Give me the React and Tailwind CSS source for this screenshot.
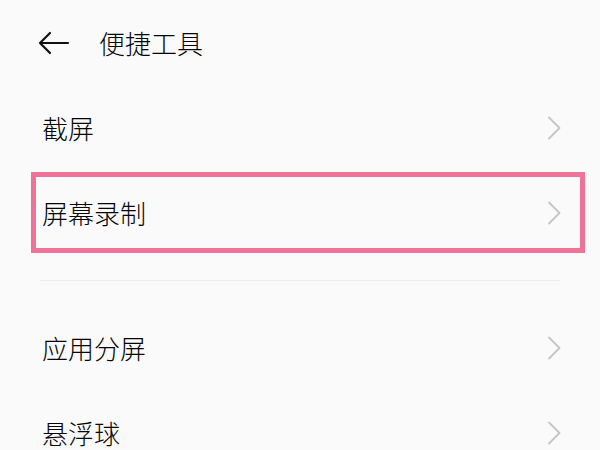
import React from "react";

const font = { fontFamily: '"Noto Sans CJK SC", "Noto Sans", sans-serif' };

function Chevron() {
  return (
    <svg width="16" height="24" viewBox="0 0 16 24" fill="none" className="shrink-0">
      <path d="M3 1.5 L13.5 12 L3 22.5" stroke="#c4c4c4" strokeWidth="1.8" strokeLinecap="round" strokeLinejoin="round" />
    </svg>
  );
}

function Row({ label }) {
  return (
    <div className="h-[85px] shrink-0 flex items-center justify-between pl-[42px] pr-[38px]">
      <span className="text-[26px] leading-none font-light text-[#050505]">{label}</span>
      <Chevron />
    </div>
  );
}

export default function App() {
  return (
    <div className="w-[600px] h-[450px] overflow-hidden bg-[#fafafa] flex flex-col" style={font}>
      <div className="h-[85px] shrink-0 flex items-center pl-[38px] gap-[29px]">
        <svg width="32" height="24" viewBox="0 0 32 24" fill="none">
          <path d="M2 12 H30 M12 2 L2 12 L12 22" stroke="#111111" strokeWidth="2.2" strokeLinecap="round" strokeLinejoin="round" />
        </svg>
        <span className="text-[26px] leading-none font-light text-[#050505]">便捷工具</span>
      </div>
      <Row label="截屏" />
      <div className="h-[85px] shrink-0 py-[2px] pl-[31px] pr-[15px]">
        <div className="h-full border-[5px] border-[#ef7298] flex items-center justify-between pl-[6px] pr-[18px]">
          <span className="text-[26px] leading-none font-light text-[#050505]">屏幕录制</span>
          <Chevron />
        </div>
      </div>
      <div className="h-[50px] shrink-0 flex items-center px-[40px]">
        <div className="h-px w-full bg-[#ebebeb]" />
      </div>
      <Row label="应用分屏" />
      <Row label="悬浮球" />
    </div>
  );
}
